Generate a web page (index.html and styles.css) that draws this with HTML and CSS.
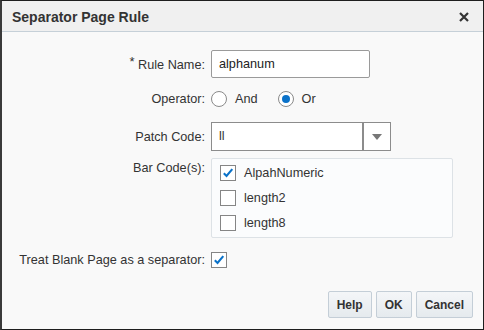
FILE: index.html
```html
<!DOCTYPE html>
<html lang="en">
<head>
    <meta charset="UTF-8">
    <title>Separator Page Rule</title>
    <link rel="stylesheet" href="styles.css">
</head>
<body>

<div class="dialog">
    <div class="dialog-header">
        <span class="dialog-title">Separator Page Rule</span>
        <svg class="close" viewBox="0 0 10 10" width="10" height="10"><path d="M1 1 L9 9 M9 1 L1 9" stroke="#333" stroke-width="2.2"/></svg>
    </div>

    <div class="dialog-body">
        <div class="row row-name">
            <label class="field-label"><span class="req">*</span> Rule Name:</label>
            <div class="text-input">alphanum</div>
        </div>

        <div class="row row-operator">
            <label class="field-label">Operator:</label>
            <div class="radios">
                <span class="radio"></span><span class="radio-text">And</span>
                <span class="radio checked"></span><span class="radio-text">Or</span>
            </div>
        </div>

        <div class="row row-patch">
            <label class="field-label">Patch Code:</label>
            <div class="select">
                <span class="select-value">ll</span>
                <span class="select-btn"><span class="arrow"></span></span>
            </div>
        </div>

        <div class="row row-barcodes">
            <label class="field-label top">Bar Code(s):</label>
            <div class="check-list">
                <div class="check-item">
                    <span class="checkbox checked">
                        <svg viewBox="0 0 16 16" width="16" height="16"><path d="M3.2 8.4 L6.3 11.4 L12.9 3.6" fill="none" stroke="#0a72c9" stroke-width="2.4"/></svg>
                    </span>
                    <span>AlpahNumeric</span>
                </div>
                <div class="check-item">
                    <span class="checkbox"></span>
                    <span>length2</span>
                </div>
                <div class="check-item">
                    <span class="checkbox"></span>
                    <span>length8</span>
                </div>
            </div>
        </div>

        <div class="row row-blank">
            <label class="blank-label">Treat Blank Page as a separator:</label>
            <span class="checkbox checked">
                <svg viewBox="0 0 16 16" width="16" height="16"><path d="M3.2 8.4 L6.3 11.4 L12.9 3.6" fill="none" stroke="#0a72c9" stroke-width="2.4"/></svg>
            </span>
        </div>

        <div class="buttons">
            <button class="btn">Help</button>
            <button class="btn">OK</button>
            <button class="btn">Cancel</button>
        </div>
    </div>
</div>

</body>
</html>
```

FILE: styles.css
```css
body {
    margin: 0;
    font-family: "Liberation Sans", Arial, sans-serif;
    font-size: 12.7px;
    color: #333;
}
.dialog {
    width: 484px;
    height: 330px;
    box-sizing: border-box;
    border: 1px solid #1e1e1e;
    border-left: 2px solid #3a3a3a;
    background: #f9f9f9;
    display: flex;
    flex-direction: column;
}
.dialog-header {
    height: 30px;
    flex: none;
    display: flex;
    align-items: center;
    justify-content: space-between;
    padding: 0 14px 0 10px;
    background: #f0f0f0;
    border-bottom: 1px solid #c6d0d8;
}
.dialog-title {
    font-size: 14px;
    font-weight: bold;
    color: #333;
    margin-top: 1px;
}
.close {
    display: block;
    margin-top: 1px;
}
.dialog-body {
    flex: 1;
    display: flex;
    flex-direction: column;
    padding-top: 18px;
}
.row {
    display: flex;
    align-items: center;
}
.field-label {
    width: 203px;
    text-align: right;
    margin-right: 6px;
    flex: none;
    color: #333;
}
.field-label.top {
    align-self: flex-start;
    padding-top: 3px;
}
.req {
    font-size: 13px;
    position: relative;
    top: -3px;
}
.text-input {
    width: 159px;
    height: 28px;
    box-sizing: border-box;
    border: 1px solid #9a9a9a;
    border-radius: 2px;
    background: #fff;
    padding-left: 7px;
    line-height: 26px;
    color: #222;
}
.row-operator {
    margin-top: 11px;
    height: 20px;
}
.radios {
    display: flex;
    align-items: center;
}
.radio {
    width: 14px;
    height: 14px;
    border: 1px solid #8a8a8a;
    border-radius: 50%;
    background: #fff;
    position: relative;
}
.radio.checked::after {
    content: "";
    position: absolute;
    left: 3px;
    top: 3px;
    width: 8px;
    height: 8px;
    border-radius: 50%;
    background: #0a72c9;
}
.radio-text {
    margin-left: 8px;
    margin-right: 20px;
}
.row-patch {
    margin-top: 13px;
}
.select {
    width: 180px;
    height: 29px;
    box-sizing: border-box;
    border: 1px solid #8c8c8c;
    background: #fff;
    display: flex;
}
.select-value {
    flex: 1;
    padding-left: 7px;
    line-height: 27px;
    color: #333;
}
.select-btn {
    width: 26px;
    border-left: 2px solid #8c8c8c;
    display: flex;
    align-items: center;
    justify-content: center;
}
.arrow {
    width: 0;
    height: 0;
    border-left: 5px solid transparent;
    border-right: 5px solid transparent;
    border-top: 6px solid #777;
}
.row-barcodes {
    margin-top: 7px;
}
.check-list {
    width: 242px;
    height: 80px;
    box-sizing: border-box;
    border: 1px solid #dde2e6;
    border-radius: 2px;
    background: #fbfcfd;
    padding: 1px 0 0 8px;
}
.check-item {
    display: flex;
    align-items: center;
    height: 25px;
}
.check-item .checkbox {
    margin-right: 8px;
}
.checkbox {
    width: 16px;
    height: 16px;
    box-sizing: border-box;
    border: 1px solid #858585;
    background: #fff;
    display: inline-flex;
    align-items: center;
    justify-content: center;
    flex: none;
}
.checkbox svg {
    display: block;
}
.row-blank {
    margin-top: 14px;
}
.blank-label {
    width: 203px;
    text-align: right;
    margin-right: 6px;
    flex: none;
}
.buttons {
    display: flex;
    justify-content: flex-end;
    gap: 4px;
    margin-top: 23px;
    padding-right: 10px;
}
.btn {
    height: 27px;
    padding: 0 8px;
    font-family: "Liberation Sans", Arial, sans-serif;
    font-size: 12px;
    font-weight: bold;
    color: #333;
    border: 1px solid #c4ced7;
    border-radius: 2px;
    background: linear-gradient(#f4f6f8, #e5eaee);
}
```
